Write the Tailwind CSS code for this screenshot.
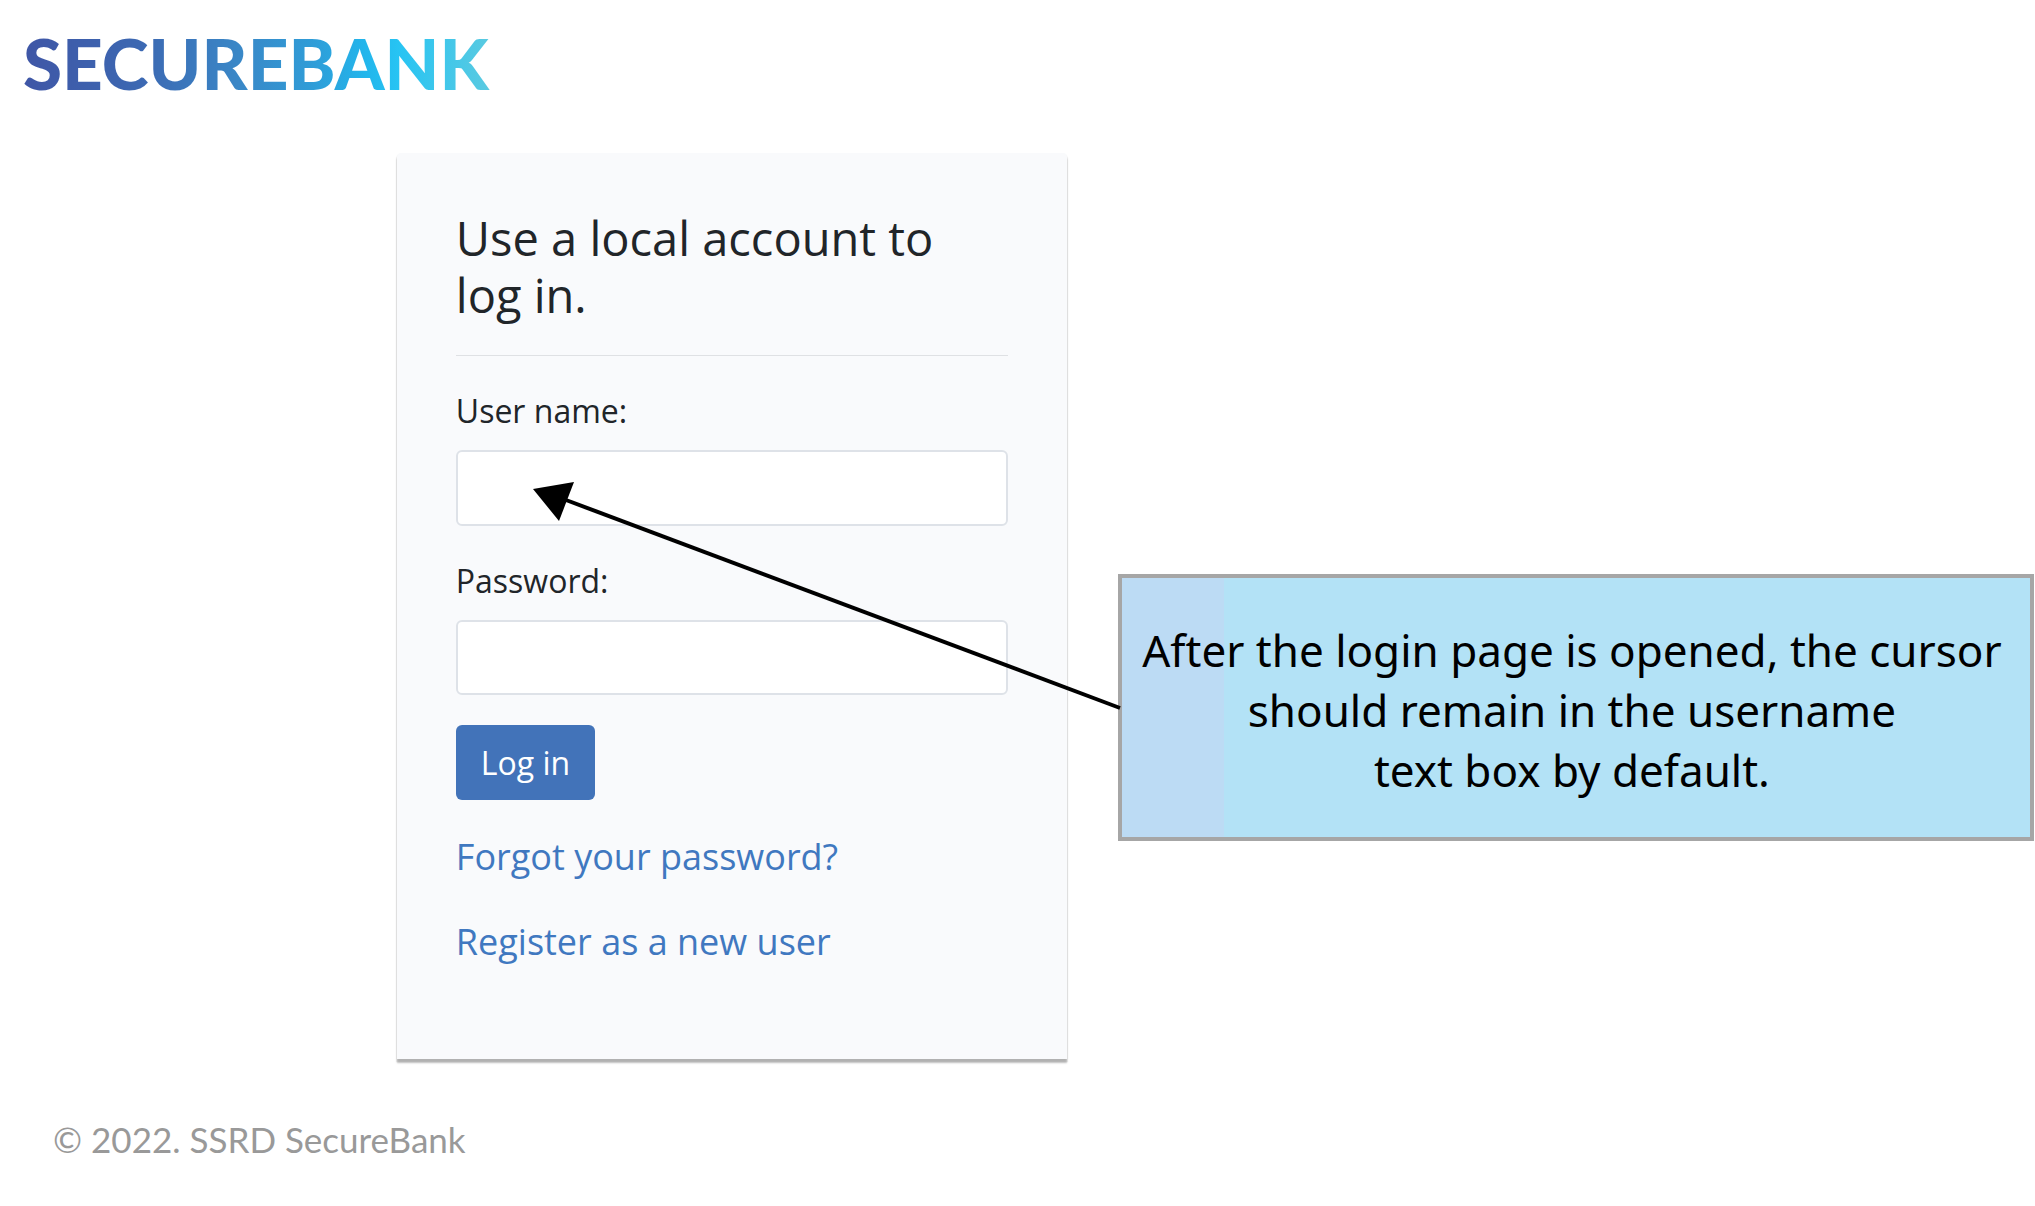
<!DOCTYPE html>
<html lang="en">
<head>
<meta charset="utf-8">
<meta name="viewport" content="width=device-width, initial-scale=1">
<title>Log in - SecureBank</title>
<script src="https://cdn.jsdelivr.net/npm/@tailwindcss/browser@4"></script>
</head>
<body class="min-h-screen overflow-x-hidden bg-white font-['Open_Sans',sans-serif] text-[#212529]">
  <header class="flex px-[23px] pt-5">
    <a href="#" class="bg-[linear-gradient(90deg,#3f56a6_0%,#3c68b2_25%,#3a86c6_45%,#2f9dd8_62%,#22b6ec_73%,#27c4f3_80%,#5ccae0_100%)] bg-clip-text pr-1 font-['Lato',sans-serif] text-[71px] leading-[85px] font-black text-transparent">SECUREBANK</a>
  </header>

  <main class="mt-12 flex items-start pl-[19.5%]">
    <section class="w-[40.9%] shrink-0 rounded-t-sm bg-[#f9fafc] px-[59px] pt-[57px] pb-[90px] shadow-[0_4px_2px_0_rgba(0,0,0,0.25),0_2px_1px_1px_rgba(0,0,0,0.07)]">
      <h1 class="text-[47px] leading-[57px]">Use a local account to log in.</h1>
      <hr class="mt-[31px] mb-[31px] border-[#dfe1e4]">
      <form class="flex flex-col items-start" onsubmit="return false">
        <label for="username" class="text-[32px] leading-[48px]">User name:</label>
        <input id="username" type="text" autocomplete="username" class="mt-[15px] h-[76px] w-full rounded-md border-2 border-[#dee2e8] bg-white px-6 text-[32px] outline-none">
        <label for="password" class="mt-[31px] text-[32px] leading-[48px]">Password:</label>
        <input id="password" type="password" autocomplete="current-password" class="mt-[15px] h-[75px] w-full rounded-md border-2 border-[#dee2e8] bg-white px-6 text-[32px] outline-none">
        <button type="submit" class="mt-[30px] h-[75px] rounded-md bg-[#4273b9] px-[25px] text-[32px] leading-[48px] text-white">Log in</button>
      </form>
      <nav class="mt-[30px] flex flex-col items-start gap-[31px] text-[36px] leading-[54px] text-[#4078c0]">
        <a href="#">Forgot your password?</a>
        <a href="#">Register as a new user</a>
      </nav>
    </section>

    <aside class="relative mt-[421px] mr-px ml-[51px] grow border-4 border-[#a6a6a6] bg-[linear-gradient(90deg,#bcdbf4_102px,#b3e2f6_102px)] pt-[42px] pr-2 pb-[37px] text-center font-['Noto_Sans',sans-serif] text-[44px] leading-[60px] whitespace-nowrap text-black">
      <!-- arrow from the note to the user name box -->
      <svg class="absolute top-[-97px] right-full" width="590" height="234" viewBox="0 0 590 234" aria-hidden="true">
        <path d="M34 19 588 227" stroke="#000" stroke-width="4"/>
        <path d="M1 8 42 1 27 40Z"/>
      </svg>
      <p>After the login page is opened, the cursor<br>should remain in the username<br>text box by default.</p>
    </aside>
  </main>

  <footer class="mt-[59px] px-[53px] pb-8 font-['Lato',sans-serif] text-[35px] leading-[42px] text-[#999]">© 2022. SSRD SecureBank</footer>
</body>
</html>
